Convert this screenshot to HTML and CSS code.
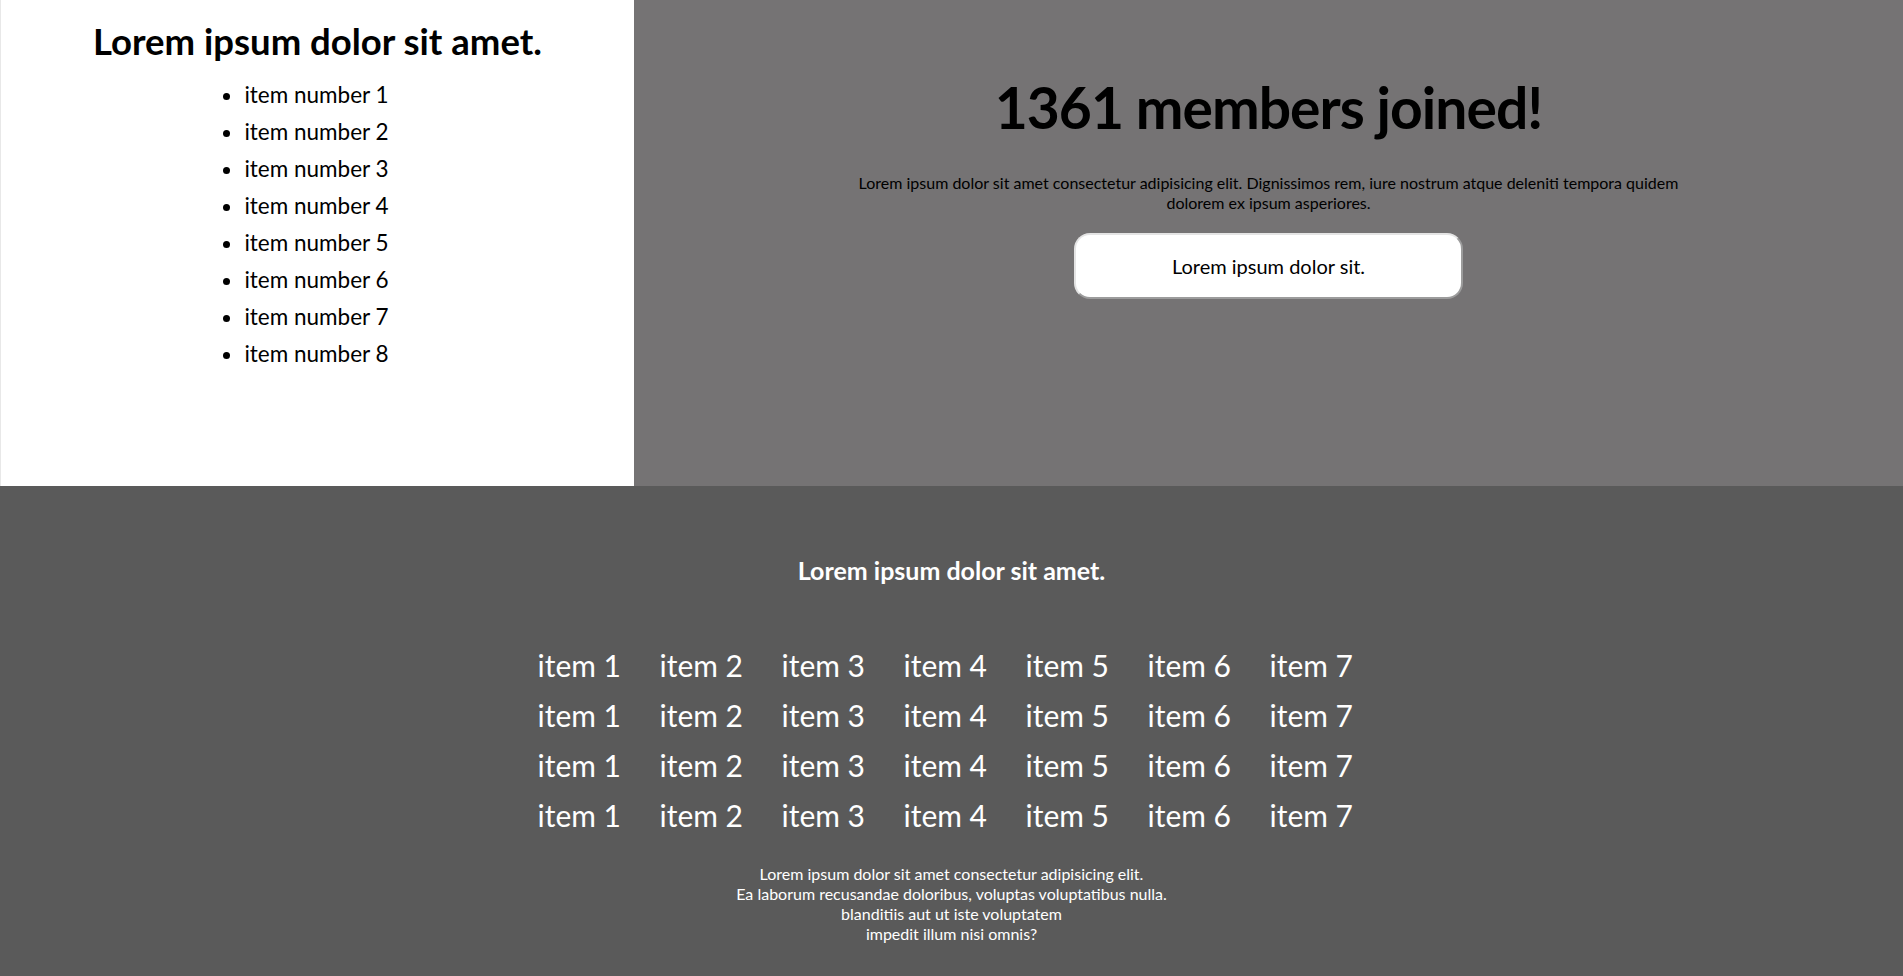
FILE: index.html
```html
<!DOCTYPE html>
<html lang="en">
<head>
<meta charset="utf-8">
<title>Members</title>
<link rel="stylesheet" href="styles.css">
</head>
<body>
<section class="top">
  <div class="left-panel">
    <h2 class="left-title">Lorem ipsum dolor sit amet.</h2>
    <ul class="item-list">
      <li>item number 1</li>
      <li>item number 2</li>
      <li>item number 3</li>
      <li>item number 4</li>
      <li>item number 5</li>
      <li>item number 6</li>
      <li>item number 7</li>
      <li>item number 8</li>
    </ul>
  </div>
  <div class="right-panel">
    <h1 class="members">1361 members joined!</h1>
    <p class="intro">Lorem ipsum dolor sit amet consectetur adipisicing elit. Dignissimos rem, iure nostrum atque deleniti tempora quidem dolorem ex ipsum asperiores.</p>
    <button class="cta">Lorem ipsum dolor sit.</button>
  </div>
</section>
<section class="bottom">
  <h3 class="bottom-title">Lorem ipsum dolor sit amet.</h3>
  <div class="grid">
    <span>item 1</span><span>item 2</span><span>item 3</span><span>item 4</span><span>item 5</span><span>item 6</span><span>item 7</span>
    <span>item 1</span><span>item 2</span><span>item 3</span><span>item 4</span><span>item 5</span><span>item 6</span><span>item 7</span>
    <span>item 1</span><span>item 2</span><span>item 3</span><span>item 4</span><span>item 5</span><span>item 6</span><span>item 7</span>
    <span>item 1</span><span>item 2</span><span>item 3</span><span>item 4</span><span>item 5</span><span>item 6</span><span>item 7</span>
  </div>
  <p class="outro">Lorem ipsum dolor sit amet consectetur adipisicing elit.<br>Ea laborum recusandae doloribus, voluptas voluptatibus nulla.<br>blanditiis aut ut iste voluptatem<br>impedit illum nisi omnis?</p>
</section>
</body>
</html>
```
FILE: styles.css
```css
* { box-sizing: border-box; }
html, body { margin: 0; padding: 0; }
body {
  font-family: "Lato", "Open Sans", sans-serif;
  color: #000;
  background: #5a5a5a;
  height: 100vh;
  display: flex;
  flex-direction: column;
  overflow: hidden;
}
.top {
  display: flex;
  height: 486px;
  flex: none;
}
.left-panel {
  width: 634px;
  background: #fff;
  border-left: 1px solid #e8e8e8;
  display: flex;
  flex-direction: column;
  align-items: center;
}
.left-title {
  margin: 19px 0 0;
  font-size: 36.5px;
  font-weight: 700;
  line-height: 44px;
}
.item-list {
  margin: 13px 0 0;
  padding-left: 0;
  list-style: disc;
  font-size: 22.5px;
  line-height: 37px;
  position: relative;
  left: -1px;
}
.item-list li { margin: 0; }
.right-panel {
  flex: 1;
  background: #757374;
  display: flex;
  flex-direction: column;
  align-items: center;
}
.members {
  margin: 72px 0 0;
  font-size: 57px;
  font-weight: 700;
  line-height: 70px;
  letter-spacing: -1px;
}
.intro {
  margin: 31px 0 0;
  width: 850px;
  text-align: center;
  font-size: 16px;
  line-height: 20px;
}
.cta {
  margin-top: 20px;
  width: 389px;
  height: 66px;
  background: #fff;
  border: 2px solid;
  border-color: #e4e4e4 #9c9c9c #9c9c9c #e4e4e4;
  border-radius: 16px;
  font-family: inherit;
  font-size: 20px;
  color: #000;
}
.bottom {
  flex: 1;
  background: #5a5a5a;
  color: #fff;
  display: flex;
  flex-direction: column;
  align-items: center;
  padding-top: 69px;
}
.bottom-title {
  margin: 0;
  font-size: 25px;
  font-weight: 700;
  line-height: 30px;
}
.grid {
  margin-top: 62px;
  margin-right: 8px;
  display: grid;
  grid-template-columns: repeat(7, 88px);
  column-gap: 34px;
  row-gap: 14px;
  font-size: 30px;
  line-height: 36px;
}
.outro {
  margin: 31px 0 0;
  text-align: center;
  font-size: 16px;
  line-height: 20px;
}
```
